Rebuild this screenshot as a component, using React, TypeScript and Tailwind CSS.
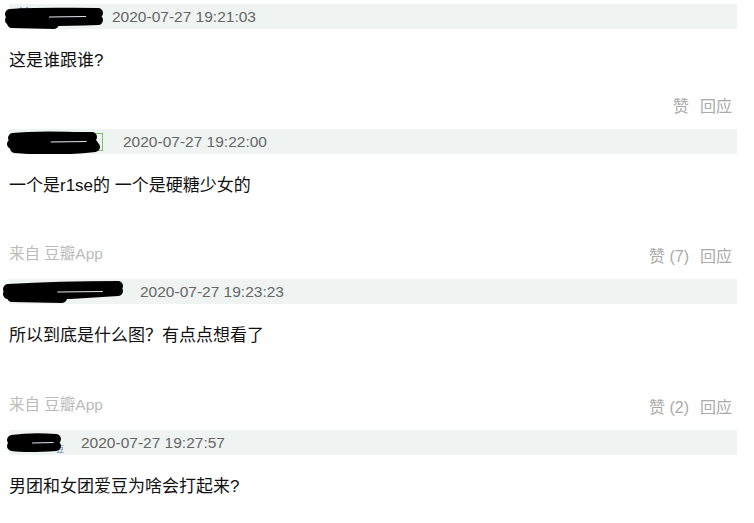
import React from "react";

type Blob = { w: number; ml: number; dateMl: number; paths: string[]; extra?: React.ReactNode };

const font = { fontFamily: '"Liberation Sans", Arial, "Noto Sans CJK SC", sans-serif' };

function Header({ blob, date }: { blob: Blob; date: string }) {
  return (
    <div className="flex h-[25px] items-center bg-[#eff4f2]">
      <svg width={blob.w} height={25} style={{ marginLeft: blob.ml }} className="shrink-0">
        {blob.extra}
        {blob.paths.map((d, i) => (
          <path key={i} d={d} stroke="#000" strokeWidth={10} strokeLinecap="round" strokeLinejoin="round" fill="none" />
        ))}
        <path d={`M${blob.w * 0.45} 13 L${blob.w * 0.82} 12.5`} stroke="#dfe8ee" strokeWidth={1.2} fill="none" />
      </svg>
      <span className="text-[15.5px] leading-[25px] text-[#666]" style={{ marginLeft: blob.dateMl }}>
        {date}
      </span>
    </div>
  );
}

function Actions({ like }: { like: string }) {
  return (
    <div className="flex items-center justify-end gap-[11px] pr-[5px] text-[16px] leading-[24px] text-[#aaa]">
      <span>{like}</span>
      <span>回应</span>
    </div>
  );
}

export default function App() {
  const b1: Blob = {
    w: 100,
    ml: -5,
    dateMl: 8,
    paths: ["M6 10 C 30 8, 60 9, 94 9", "M6 16 C 35 18, 65 17, 94 16", "M8 19 L 50 20"],
    extra: <text x="14" y="13" fontSize="11" fill="#4a76a8">新二</text>,
  };
  const b2: Blob = {
    w: 97,
    ml: -2,
    dateMl: 19,
    paths: ["M6 9 C 30 6, 55 8, 85 8", "M5 15 C 30 17, 60 19, 86 15", "M8 19 C 40 22, 70 20, 88 18"],
    extra: <rect x="87.5" y="4.5" width="8" height="17" fill="none" stroke="#7bbf6a" strokeWidth="1" />,
  };
  const b3: Blob = {
    w: 123,
    ml: -7,
    dateMl: 15,
    paths: ["M6 10 C 40 8, 80 7, 116 7", "M6 15 C 40 16, 80 15, 116 12", "M10 18 L 60 19"],
  };
  const b4: Blob = {
    w: 58,
    ml: -3,
    dateMl: 17,
    paths: ["M6 10 C 20 8, 35 8, 50 9", "M6 16 C 20 18, 35 17, 50 16"],
    extra: <text x="50" y="22" fontSize="8" fill="#4a76a8">豆</text>,
  };

  const body = "mt-[20px] text-[17px] leading-[24px] text-[#111]";

  return (
    <div className="min-h-[523px] w-[754px] bg-white" style={font}>
      <div className="ml-[9px] w-[728px] pt-[4px]">
        {/* Comment 1 */}
        <Header blob={b1} date="2020-07-27 19:21:03" />
        <div className={body}>这是谁跟谁?</div>
        <div className="mt-[22px] mb-[10px]">
          <Actions like="赞" />
        </div>

        {/* Comment 2 */}
        <Header blob={b2} date="2020-07-27 19:22:00" />
        <div className={body}>一个是r1se的 一个是硬糖少女的</div>
        <div className="mt-[44px] mb-[10px] flex items-end justify-between">
          <span className="text-[15.5px] leading-[24px] text-[#bbb] mb-[3px]">来自 豆瓣App</span>
          <Actions like="赞 (7)" />
        </div>

        {/* Comment 3 */}
        <Header blob={b3} date="2020-07-27 19:23:23" />
        <div className={body}>所以到底是什么图？有点点想看了</div>
        <div className="mt-[45px] mb-[10px] flex items-end justify-between">
          <span className="text-[15.5px] leading-[24px] text-[#bbb] mb-[3px]">来自 豆瓣App</span>
          <Actions like="赞 (2)" />
        </div>

        {/* Comment 4 */}
        <Header blob={b4} date="2020-07-27 19:27:57" />
        <div className={body}>男团和女团爱豆为啥会打起来?</div>
      </div>
    </div>
  );
}
